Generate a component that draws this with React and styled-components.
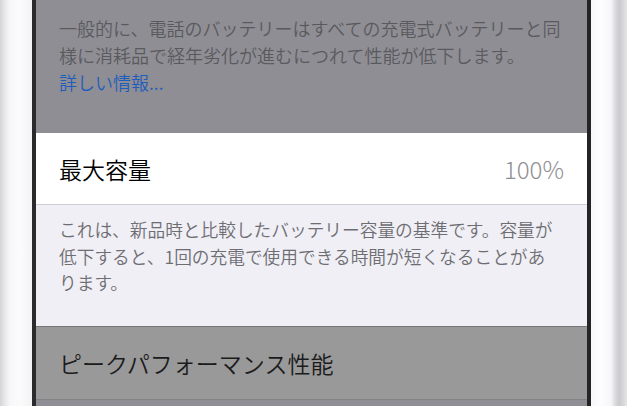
import styled, { createGlobalStyle } from "styled-components"

const GlobalStyle = createGlobalStyle`
html, body {
  margin: 0;
  padding: 0;
  background: #f4f4f6;
}
body {
  font-family: "Noto Sans CJK JP", "Noto Sans", sans-serif;
  font-weight: 350;
  -webkit-font-smoothing: antialiased;
}
`

const Phone = styled.div`
display: flex;
width: 627px;
height: 406px;
overflow: hidden;
`

const LeftBezel = styled.div`
width: 32px;
flex-shrink: 0;
background: linear-gradient(to right, #d4d4d8 0px, #e9e9ec 5px, #f7f7f9 10px, #fbfbfc 20px, #f3f3f5 32px);
`

const RightBezel = styled.div`
width: 36px;
flex-shrink: 0;
background: linear-gradient(to right, #f6f7f9 0px, #fdfdfe 10px, #f6f6f8 20px, #dcdcdf 24px, #cbcbcf 28px, #d6d6d9 32px, #e6e6e9 36px);
`

const Screen = styled.div`
flex: 1;
display: flex;
flex-direction: column;
border-left: 4px solid #2b2b2d;
border-right: 4px solid #242426;
background: #8f8e94;
`

const Note = styled.div`
padding: ${p => p.$pad};
background: ${p => p.$dim ? "#8f8e94" : "#f0eff5"};
color: ${p => p.$dim ? "#5a5a5e" : "#6d6d72"};
font-size: ${p => p.$size};
line-height: ${p => p.$lh};
white-space: nowrap;
border-bottom: ${p => p.$dim ? "none" : "1px solid #77777b"};
`

const Link = styled.span`
color: #1f5dbd;
`

const Row = styled.div`
display: flex;
align-items: center;
justify-content: space-between;
height: ${p => p.$h};
padding: 0 23px;
background: ${p => p.$dim ? "#999999" : "#ffffff"};
border-bottom: 1px solid ${p => p.$dim ? "#828286" : "#cfcfd3"};
font-size: 23px;
color: ${p => p.$dim ? "#1b1b1c" : "#000000"};
flex-shrink: 0;
`

const Value = styled.span`
color: #8e8e93;
font-size: 24px;
font-weight: 300;
`

const Rest = styled.div`
flex: 1;
background: #8f8e94;
`

export default function App() {
  return (
    <Phone>
      <GlobalStyle />
      <LeftBezel />
      <Screen>
        <Note $dim $pad="15px 23px 37px" $size="18px" $lh="27px">
          一般的に、電話のバッテリーはすべての充電式バッテリーと同<br />
          様に消耗品で経年劣化が進むにつれて性能が低下します。<br />
          <Link>詳しい情報...</Link>
        </Note>
        <Row $h="71px">
          <span>最大容量</span>
          <Value>100%</Value>
        </Row>
        <Note $pad="11px 23px 30px" $size="17.7px" $lh="26.5px">
          これは、新品時と比較したバッテリー容量の基準です。容量が<br />
          低下すると、1回の充電で使用できる時間が短くなることがあ<br />
          ります。
        </Note>
        <Row $dim $h="72px">
          <span>ピークパフォーマンス性能</span>
        </Row>
        <Rest />
      </Screen>
      <RightBezel />
    </Phone>
  )
}
